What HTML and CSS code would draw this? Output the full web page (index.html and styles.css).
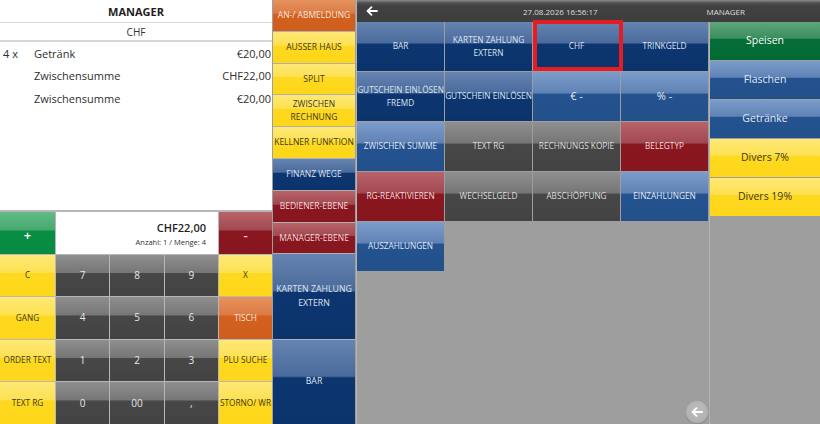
FILE: index.html
```html
<!DOCTYPE html>
<html lang="de">
<head>
<meta charset="utf-8">
<title>Kasse</title>
<link rel="stylesheet" href="styles.css">
</head>
<body>
<div class="pos">
  <section class="left">
    <div class="receipt">
      <div class="r-user">MANAGER</div>
      <div class="r-cur">CHF</div>
      <div class="r-lines">
        <div class="r-line"><span class="qty">4 x</span><span class="name">Getränk</span><span class="price">€20,00</span></div>
        <div class="r-line"><span class="qty"></span><span class="name">Zwischensumme</span><span class="price">CHF22,00</span></div>
        <div class="r-line"><span class="qty"></span><span class="name">Zwischensumme</span><span class="price">€20,00</span></div>
      </div>
    </div>
    <div class="keypad">
      <div class="btn b-grn big-sign">+</div>
      <div class="display">
        <div class="d-total">CHF22,00</div>
        <div class="d-info">Anzahl: 1 / Menge: 4</div>
      </div>
      <div class="btn b-red big-sign">-</div>

      <div class="btn b-yel">C</div>
      <div class="btn b-gray num">7</div>
      <div class="btn b-gray num">8</div>
      <div class="btn b-gray num">9</div>
      <div class="btn b-yel">X</div>

      <div class="btn b-yel">GANG</div>
      <div class="btn b-gray num">4</div>
      <div class="btn b-gray num">5</div>
      <div class="btn b-gray num">6</div>
      <div class="btn b-org">TISCH</div>

      <div class="btn b-yel">ORDER TEXT</div>
      <div class="btn b-gray num">1</div>
      <div class="btn b-gray num">2</div>
      <div class="btn b-gray num">3</div>
      <div class="btn b-yel">PLU SUCHE</div>

      <div class="btn b-yel">TEXT RG</div>
      <div class="btn b-gray num">0</div>
      <div class="btn b-gray num">00</div>
      <div class="btn b-gray num">,</div>
      <div class="btn b-yel">STORNO/ WR</div>
    </div>
  </section>

  <nav class="side">
    <div class="btn b-org s-small">AN-/ ABMELDUNG</div>
    <div class="btn b-yel s-small">AUSSER HAUS</div>
    <div class="btn b-yel s-small">SPLIT</div>
    <div class="btn b-yel s-small">ZWISCHEN<br>RECHNUNG</div>
    <div class="btn b-yel s-small">KELLNER FUNKTION</div>
    <div class="btn b-dk s-small">FINANZ WEGE</div>
    <div class="btn b-red s-small">BEDIENER-EBENE</div>
    <div class="btn b-red s-small">MANAGER-EBENE</div>
    <div class="btn b-dk s-big">KARTEN ZAHLUNG<br>EXTERN</div>
    <div class="btn b-dk s-big">BAR</div>
  </nav>

  <main class="main">
    <header class="topbar">
      <div class="tb-back">
        <svg width="12" height="10" viewBox="0 0 12 10"><path d="M11 5H2M5.5 1.2L1.6 5l3.9 3.8" fill="none" stroke="#fff" stroke-width="1.8" stroke-linecap="round" stroke-linejoin="round"/></svg>
      </div>
      <div class="tb-date">27.08.2026 16:56:17</div>
      <div class="tb-user">MANAGER</div>
    </header>
    <div class="content">
      <div class="area">
        <div class="grid">
          <div class="btn b-dk">BAR</div>
          <div class="btn b-dk">KARTEN ZAHLUNG<br>EXTERN</div>
          <div class="btn b-dk selected">CHF</div>
          <div class="btn b-dk">TRINKGELD</div>

          <div class="btn b-dk">GUTSCHEIN EINLÖSEN<br>FREMD</div>
          <div class="btn b-dk">GUTSCHEIN EINLÖSEN</div>
          <div class="btn b-md sym">€ -</div>
          <div class="btn b-md sym">% -</div>

          <div class="btn b-md">ZWISCHEN SUMME</div>
          <div class="btn b-gray">TEXT RG</div>
          <div class="btn b-gray">RECHNUNGS KOPIE</div>
          <div class="btn b-red">BELEGTYP</div>

          <div class="btn b-red">RG-REAKTIVIEREN</div>
          <div class="btn b-gray">WECHSELGELD</div>
          <div class="btn b-gray">ABSCHÖPFUNG</div>
          <div class="btn b-md">EINZAHLUNGEN</div>

          <div class="btn b-md">AUSZAHLUNGEN</div>
        </div>
        <button class="round-back" type="button">
          <svg width="12" height="10" viewBox="0 0 12 10"><path d="M11 5H2M5.5 1.2L1.6 5l3.9 3.8" fill="none" stroke="#fff" stroke-width="1.8" stroke-linecap="round" stroke-linejoin="round"/></svg>
        </button>
      </div>
      <aside class="cats">
        <div class="btn b-green2 cat">Speisen</div>
        <div class="btn b-md cat">Flaschen</div>
        <div class="btn b-md cat">Getränke</div>
        <div class="btn b-yel cat">Divers 7%</div>
        <div class="btn b-yel cat">Divers 19%</div>
      </aside>
    </div>
  </main>
</div>
</body>
</html>
```
FILE: styles.css
```css
* { box-sizing: border-box; }

html, body {
  margin: 0;
  padding: 0;
  background: #9e9e9e;
}

body {
  font-family: "Open Sans", "Noto Sans", "Liberation Sans", sans-serif;
  width: 820px;
  height: 424px;
  overflow: hidden;
}

.pos {
  display: flex;
  width: 820px;
  height: 424px;
}

/* ---------- shared button look ---------- */
.btn {
  display: flex;
  align-items: center;
  justify-content: center;
  text-align: center;
  font-size: 8.25px;
  line-height: 1.5;
  color: #e3e8f0;
  white-space: nowrap;
  overflow: hidden;
}

.b-dk   { background: linear-gradient(#6584b1 0%, #4a6a9c 43%, #0d3671 45%, #0b336b 100%); color: #dde4ee; }
.b-md   { background: linear-gradient(#7c9dcb 0%, #5f82b5 43%, #24538f 45%, #22508b 100%); color: #e3e9f2; }
.b-red  { background: linear-gradient(#b8636a 0%, #a24852 43%, #8b1720 45%, #86161f 100%); color: #f1dcdc; }
.b-gray { background: linear-gradient(#8f8f8f 0%, #767676 43%, #474747 45%, #434343 100%); color: #dcdcdc; }
.b-yel  { background: linear-gradient(#fee877 0%, #fde151 43%, #fed91f 45%, #fed61a 100%); color: #3d3620; }
.b-org  { background: linear-gradient(#e5925f 0%, #dc7a43 43%, #d2611f 45%, #cf5e1d 100%); color: #f7e7dc; }
.b-grn  { background: linear-gradient(#63ba86 0%, #47a96e 43%, #098e44 45%, #088a42 100%); color: #ffffff; }
.b-green2 { background: linear-gradient(#5ea67c 0%, #3c8d5e 43%, #046e38 45%, #036a36 100%); color: #ffffff; }

/* ---------- receipt + keypad ---------- */
.left {
  width: 272px;
  display: flex;
  flex-direction: column;
  background: #b7b7b7;
}

.receipt {
  height: 210px;
  background: #ffffff;
  color: #2c2c2c;
}

.r-user {
  height: 23px;
  display: flex;
  align-items: center;
  justify-content: center;
  font-size: 11px;
  font-weight: 700;
  color: #1e1e1e;
  border-bottom: 1px solid #d9d9d9;
}

.r-cur {
  height: 19px;
  display: flex;
  align-items: center;
  justify-content: center;
  font-size: 10px;
  color: #333;
  border-bottom: 2px solid #d6d6d6;
}

.r-line {
  height: 22.5px;
  display: flex;
  align-items: center;
  font-size: 11px;
  color: #2e2e2e;
  padding-right: 1px;
}

.r-line .qty { width: 34px; padding-left: 3px; }
.r-line .name { flex: 1; }
.r-line .price { text-align: right; }

.keypad {
  margin-top: 2px;
  flex: 1;
  display: grid;
  grid-template-columns: 55px repeat(3, 1fr) 53px;
  grid-template-rows: repeat(5, 1fr);
  gap: 1px;
}

.display {
  grid-column: span 3;
  background: #ffffff;
  display: flex;
  flex-direction: column;
  justify-content: center;
  align-items: flex-end;
  padding-right: 12px;
  padding-top: 2px;
}

.d-total {
  font-size: 11px;
  font-weight: 600;
  color: #1e1e1e;
  line-height: 16px;
}

.d-info {
  font-size: 7.5px;
  color: #333;
  line-height: 12px;
}

.big-sign {
  font-size: 13px;
  font-weight: 600;
  padding-top: 5px;
}

.num {
  font-size: 10px;
  color: #e6e6e6;
}

/* ---------- function column ---------- */
.side {
  width: 82px;
  margin-left: 1px;
  display: flex;
  flex-direction: column;
  gap: 1px;
  background: #b0b0b0;
}

.s-small { flex: 0 0 30.8px; font-size: 8.5px; }
.s-big   { flex: 1; font-size: 8.75px; }

/* ---------- main area ---------- */
.main {
  flex: 1;
  margin-left: 1px;
  display: flex;
  flex-direction: column;
  border-left: 1px solid #b4b4b4;
}

.topbar {
  height: 22px;
  display: flex;
  align-items: center;
  background: linear-gradient(#8c8c8c 0, #505050 3px, #414141 6px, #3d3d3d 100%);
  color: #dedede;
  font-size: 8px;
}

.tb-back {
  width: 166px;
  padding-left: 9px;
  display: flex;
  align-items: center;
}

.tb-user {
  margin-left: auto;
  padding-right: 75px;
}

.content {
  flex: 1;
  display: flex;
}

.area {
  position: relative;
  flex: 1;
}

.grid {
  display: grid;
  grid-template-columns: repeat(4, 1fr);
  grid-auto-rows: 49px;
  gap: 1px;
  padding-right: 1px;
}

.sym { font-size: 11px; }

.selected { position: relative; overflow: visible; }

.selected::after {
  content: "";
  position: absolute;
  top: -2px;
  left: 0;
  right: -3px;
  bottom: 0;
  border: 4px solid #e41d24;
}

.round-back {
  position: absolute;
  right: 1px;
  bottom: 1px;
  width: 22px;
  height: 22px;
  border: 0;
  padding: 0;
  border-radius: 50%;
  background: radial-gradient(circle at 50% 40%, #bdbdbd 0%, #b1b1b1 70%, #a6a6a6 100%);
  box-shadow: 0 1px 2px rgba(0, 0, 0, 0.15);
  display: flex;
  align-items: center;
  justify-content: center;
}

.cats {
  width: 111px;
  border-left: 1px solid #b3b3b3;
  display: flex;
  flex-direction: column;
  gap: 1px;
}

.cat {
  flex: 0 0 38px;
  font-size: 10.5px;
}
```
